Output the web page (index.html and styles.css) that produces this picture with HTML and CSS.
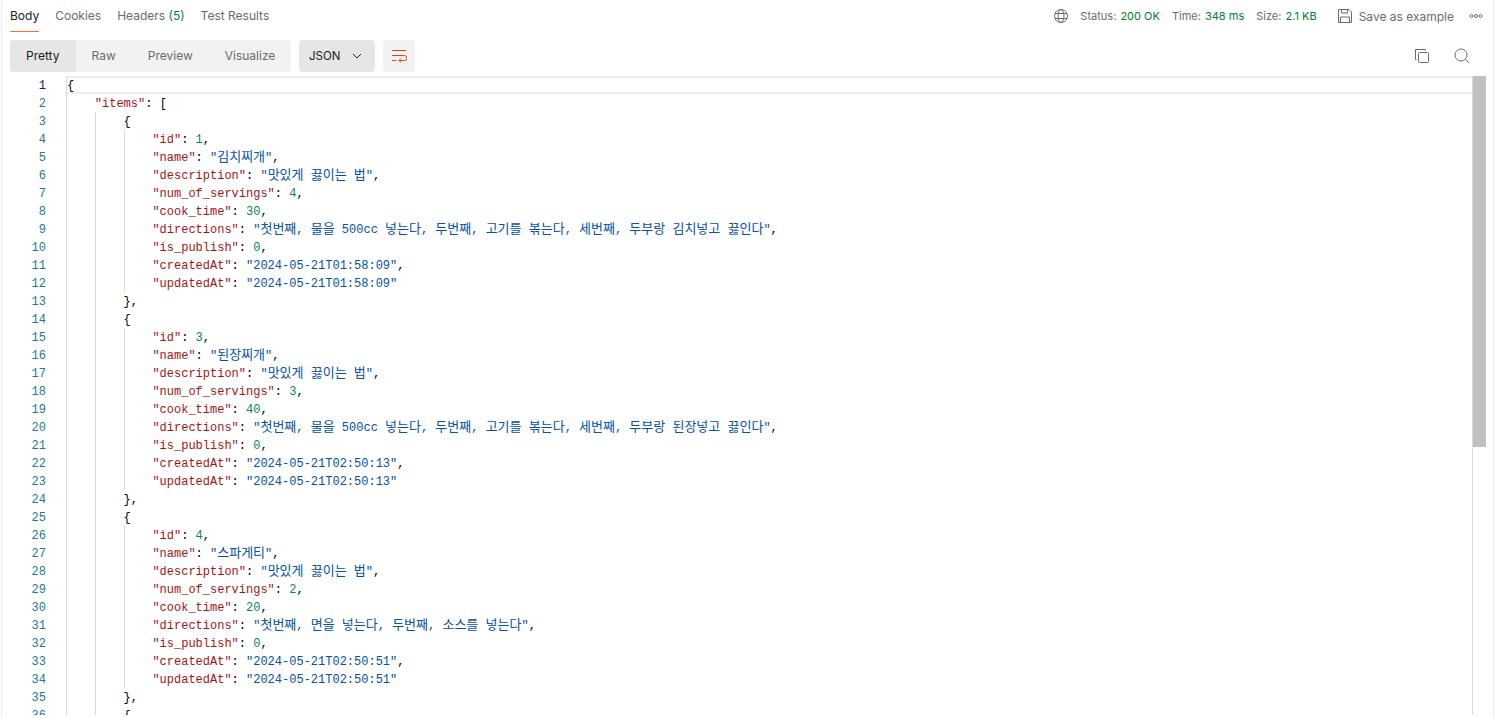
FILE: index.html
```html
<!DOCTYPE html>
<html lang="ko">
<head>
<meta charset="utf-8">
<title>Response</title>
<link rel="stylesheet" href="styles.css">
</head>
<body>
<div class="pane">
  <header class="tabs">
    <nav class="tablist">
      <span class="tab active">Body</span>
      <span class="tab">Cookies</span>
      <span class="tab">Headers <em>(5)</em></span>
      <span class="tab">Test Results</span>
    </nav>
    <div class="meta">
      <svg class="ico globe" width="16" height="16" viewBox="0 0 16 16"><circle cx="8" cy="8" r="6.5"/><ellipse cx="8" cy="8" rx="3" ry="6.5"/><path d="M2 5.500h12M2 10.500h12"/></svg>
      <span class="stat">Status: <b>200 OK</b></span>
      <span class="stat">Time: <b>348 ms</b></span>
      <span class="stat">Size: <b>2.1 KB</b></span>
      <span class="save">
        <svg class="ico" width="16" height="16" viewBox="0 0 16 16"><path d="M1.500 1.500h10.500l2.500 2.500v10.500h-13z"/><path d="M4.500 1.500v3.500h6v-3.500M3.500 14.500v-5.500h9v5.500"/></svg>
        Save as example
      </span>
      <svg class="ico dots" width="14" height="14" viewBox="0 0 14 14"><circle cx="2.500" cy="7" r="1.500"/><circle cx="7" cy="7" r="1.500"/><circle cx="11.500" cy="7" r="1.500"/></svg>
    </div>
  </header>
  <div class="toolbar">
    <div class="seg">
      <span class="opt on">Pretty</span>
      <span class="opt">Raw</span>
      <span class="opt">Preview</span>
      <span class="opt">Visualize</span>
    </div>
    <div class="select">JSON
      <svg class="ico" width="12" height="12" viewBox="0 0 12 12"><path d="M2 4l4 4 4-4"/></svg>
    </div>
    <div class="wrap">
      <svg class="wrapi" width="16" height="16" viewBox="0 0 16 16"><path d="M1 2.500h14M1 7.500h12.500a2.500 2.500 0 0 1 0 5H8M10 10.500l-2 2 2 2M1 12.500h4.500"/></svg>
    </div>
    <div class="tools">
      <svg class="ico" width="16" height="16" viewBox="0 0 16 16"><path d="M2.500 11.500h-1v-10h10v1"/><rect x="4.500" y="4.500" width="10" height="10" rx="1"/></svg>
      <svg class="ico" width="16" height="16" viewBox="0 0 16 16"><circle cx="7" cy="7" r="6"/><path d="M11.500 11.500l3.500 3.500"/></svg>
    </div>
  </div>
  <div class="editor">
    <div class="code">
      <div class="row cur"><span class="n">1</span><span class="l"><u>{</u></span></div>
      <div class="row"><span class="n">2</span><span class="l"><i></i><s>"items"</s>: <u>[</u></span></div>
      <div class="row"><span class="n">3</span><span class="l"><i></i><i class="g"></i><u>{</u></span></div>
      <div class="row"><span class="n">4</span><span class="l"><i></i><i class="g"></i><i class="g"></i><s>"id"</s>: <b>1</b>,</span></div>
      <div class="row"><span class="n">5</span><span class="l"><i></i><i class="g"></i><i class="g"></i><s>"name"</s>: <q>"<span class="k">김치찌개</span>"</q>,</span></div>
      <div class="row"><span class="n">6</span><span class="l"><i></i><i class="g"></i><i class="g"></i><s>"description"</s>: <q>"<span class="k">맛있게</span> <span class="k">끓이는</span> <span class="k">법</span>"</q>,</span></div>
      <div class="row"><span class="n">7</span><span class="l"><i></i><i class="g"></i><i class="g"></i><s>"num_of_servings"</s>: <b>4</b>,</span></div>
      <div class="row"><span class="n">8</span><span class="l"><i></i><i class="g"></i><i class="g"></i><s>"cook_time"</s>: <b>30</b>,</span></div>
      <div class="row"><span class="n">9</span><span class="l"><i></i><i class="g"></i><i class="g"></i><s>"directions"</s>: <q>"<span class="k">첫번째</span>, <span class="k">물을</span> 500cc <span class="k">넣는다</span>, <span class="k">두번째</span>, <span class="k">고기를</span> <span class="k">볶는다</span>, <span class="k">세번째</span>, <span class="k">두부랑</span> <span class="k">김치넣고</span> <span class="k">끓인다</span>"</q>,</span></div>
      <div class="row"><span class="n">10</span><span class="l"><i></i><i class="g"></i><i class="g"></i><s>"is_publish"</s>: <b>0</b>,</span></div>
      <div class="row"><span class="n">11</span><span class="l"><i></i><i class="g"></i><i class="g"></i><s>"createdAt"</s>: <q>"2024-05-21T01:58:09"</q>,</span></div>
      <div class="row"><span class="n">12</span><span class="l"><i></i><i class="g"></i><i class="g"></i><s>"updatedAt"</s>: <q>"2024-05-21T01:58:09"</q></span></div>
      <div class="row"><span class="n">13</span><span class="l"><i></i><i class="g"></i><u>}</u>,</span></div>
      <div class="row"><span class="n">14</span><span class="l"><i></i><i class="g"></i><u>{</u></span></div>
      <div class="row"><span class="n">15</span><span class="l"><i></i><i class="g"></i><i class="g"></i><s>"id"</s>: <b>3</b>,</span></div>
      <div class="row"><span class="n">16</span><span class="l"><i></i><i class="g"></i><i class="g"></i><s>"name"</s>: <q>"<span class="k">된장찌개</span>"</q>,</span></div>
      <div class="row"><span class="n">17</span><span class="l"><i></i><i class="g"></i><i class="g"></i><s>"description"</s>: <q>"<span class="k">맛있게</span> <span class="k">끓이는</span> <span class="k">법</span>"</q>,</span></div>
      <div class="row"><span class="n">18</span><span class="l"><i></i><i class="g"></i><i class="g"></i><s>"num_of_servings"</s>: <b>3</b>,</span></div>
      <div class="row"><span class="n">19</span><span class="l"><i></i><i class="g"></i><i class="g"></i><s>"cook_time"</s>: <b>40</b>,</span></div>
      <div class="row"><span class="n">20</span><span class="l"><i></i><i class="g"></i><i class="g"></i><s>"directions"</s>: <q>"<span class="k">첫번째</span>, <span class="k">물을</span> 500cc <span class="k">넣는다</span>, <span class="k">두번째</span>, <span class="k">고기를</span> <span class="k">볶는다</span>, <span class="k">세번째</span>, <span class="k">두부랑</span> <span class="k">된장넣고</span> <span class="k">끓인다</span>"</q>,</span></div>
      <div class="row"><span class="n">21</span><span class="l"><i></i><i class="g"></i><i class="g"></i><s>"is_publish"</s>: <b>0</b>,</span></div>
      <div class="row"><span class="n">22</span><span class="l"><i></i><i class="g"></i><i class="g"></i><s>"createdAt"</s>: <q>"2024-05-21T02:50:13"</q>,</span></div>
      <div class="row"><span class="n">23</span><span class="l"><i></i><i class="g"></i><i class="g"></i><s>"updatedAt"</s>: <q>"2024-05-21T02:50:13"</q></span></div>
      <div class="row"><span class="n">24</span><span class="l"><i></i><i class="g"></i><u>}</u>,</span></div>
      <div class="row"><span class="n">25</span><span class="l"><i></i><i class="g"></i><u>{</u></span></div>
      <div class="row"><span class="n">26</span><span class="l"><i></i><i class="g"></i><i class="g"></i><s>"id"</s>: <b>4</b>,</span></div>
      <div class="row"><span class="n">27</span><span class="l"><i></i><i class="g"></i><i class="g"></i><s>"name"</s>: <q>"<span class="k">스파게티</span>"</q>,</span></div>
      <div class="row"><span class="n">28</span><span class="l"><i></i><i class="g"></i><i class="g"></i><s>"description"</s>: <q>"<span class="k">맛있게</span> <span class="k">끓이는</span> <span class="k">법</span>"</q>,</span></div>
      <div class="row"><span class="n">29</span><span class="l"><i></i><i class="g"></i><i class="g"></i><s>"num_of_servings"</s>: <b>2</b>,</span></div>
      <div class="row"><span class="n">30</span><span class="l"><i></i><i class="g"></i><i class="g"></i><s>"cook_time"</s>: <b>20</b>,</span></div>
      <div class="row"><span class="n">31</span><span class="l"><i></i><i class="g"></i><i class="g"></i><s>"directions"</s>: <q>"<span class="k">첫번째</span>, <span class="k">면을</span> <span class="k">넣는다</span>, <span class="k">두번째</span>, <span class="k">소스를</span> <span class="k">넣는다</span>"</q>,</span></div>
      <div class="row"><span class="n">32</span><span class="l"><i></i><i class="g"></i><i class="g"></i><s>"is_publish"</s>: <b>0</b>,</span></div>
      <div class="row"><span class="n">33</span><span class="l"><i></i><i class="g"></i><i class="g"></i><s>"createdAt"</s>: <q>"2024-05-21T02:50:51"</q>,</span></div>
      <div class="row"><span class="n">34</span><span class="l"><i></i><i class="g"></i><i class="g"></i><s>"updatedAt"</s>: <q>"2024-05-21T02:50:51"</q></span></div>
      <div class="row"><span class="n">35</span><span class="l"><i></i><i class="g"></i><u>}</u>,</span></div>
      <div class="row"><span class="n">36</span><span class="l"><i></i><i class="g"></i><u>{</u></span></div>
    </div>
    <div class="track"><div class="thumb"></div></div>
  </div>
</div>
</body>
</html>
```

FILE: styles.css
```css
* { box-sizing: border-box; }
html, body { margin: 0; height: 100%; background: #fff; overflow: hidden; }
body { font-family: Inter, "Liberation Sans", sans-serif; font-size: 12px; color: #6b6b6b; }

.pane {
  width: 1493px;
  height: 718px;
  margin-left: 1px;
  border-left: 1px solid #ededed;
  border-right: 1px solid #ededed;
  display: flex;
  flex-direction: column;
}

.tabs { height: 32px; display: flex; justify-content: space-between; padding: 0 10px 0 8px; flex: none; }
.tablist { display: flex; gap: 16px; }
.tab { height: 32px; line-height: 32px; white-space: nowrap; }
.tab em { font-style: normal; color: #007f31; }
.tab.active { color: #212121; border-bottom: 1px solid #ff6c37; }

.meta { display: flex; align-items: center; height: 32px; }
.stat { margin-right: 12px; white-space: nowrap; font-size: 11px; }
.stat b { font-weight: 400; color: #007f31; margin-left: 1px; }
.globe { margin-right: 11px; }
.save { display: flex; align-items: center; gap: 6px; margin-left: 8px; white-space: nowrap; }
.dots { margin-left: 15px; }

.ico { fill: none; stroke: #6b6b6b; stroke-width: 1; flex: none; }

.toolbar { display: flex; align-items: center; height: 32px; margin-top: 8px; padding-left: 8px; gap: 8px; flex: none; }
.seg { display: flex; width: 281px; height: 32px; background: #f2f2f2; border-radius: 4px; overflow: hidden; }
.opt { padding: 0 16px; line-height: 32px; white-space: nowrap; }
.opt.on { width: 66px; text-align: center; background: #e6e6e6; color: #212121; }
.select { width: 76px; height: 32px; background: #e6e6e6; border-radius: 4px; color: #212121; font-size: 11.5px; display: flex; align-items: center; justify-content: space-between; padding: 0 12px 0 10px; }
.select .ico { stroke: #212121; }
.wrap { width: 32px; height: 32px; background: #f2f2f2; border-radius: 4px; display: flex; align-items: center; justify-content: center; }
.wrapi { fill: none; stroke: #d9480f; stroke-width: 1; }
.tools { margin-left: auto; display: flex; gap: 24px; padding-right: 23px; }

.editor { margin-top: 4px; height: 639px; display: flex; overflow: hidden; flex: none; }
.code { flex: 1; min-width: 0; overflow: hidden; font-family: "Liberation Mono", "Noto Sans CJK KR", monospace; font-size: 12px; color: #000; }
.row { display: flex; height: 18px; line-height: 20px; white-space: pre; }
.n { width: 65px; flex: none; padding-right: 20px; text-align: right; color: #237893; border-right: 1px solid #d9d9d9; }
.l { flex: 1; display: flex; min-width: 0; margin-left: -1px; }
.l u { text-decoration: none; }
.l s { text-decoration: none; color: #a31515; }
.l q { quotes: none; color: #0451a5; }
.l b { font-weight: 400; color: #098658; }
.l i { width: 28.8px; height: 18px; flex: none; }
.l i.g { border-left: 1px solid #d9d9d9; }
.k { font-family: "Noto Sans CJK KR", sans-serif; font-size: 13px; line-height: 1; }
.cur .n { color: #0b216f; }
.cur .l { margin-left: 0; padding-left: 0; border-top: 2px solid #eee; border-bottom: 2px solid #eee; line-height: 16px; }

.track { width: 14px; flex: none; border-left: 1px solid #dcdcdc; margin-right: 7px; }
.thumb { height: 371px; background: #c1c1c1; }
```
